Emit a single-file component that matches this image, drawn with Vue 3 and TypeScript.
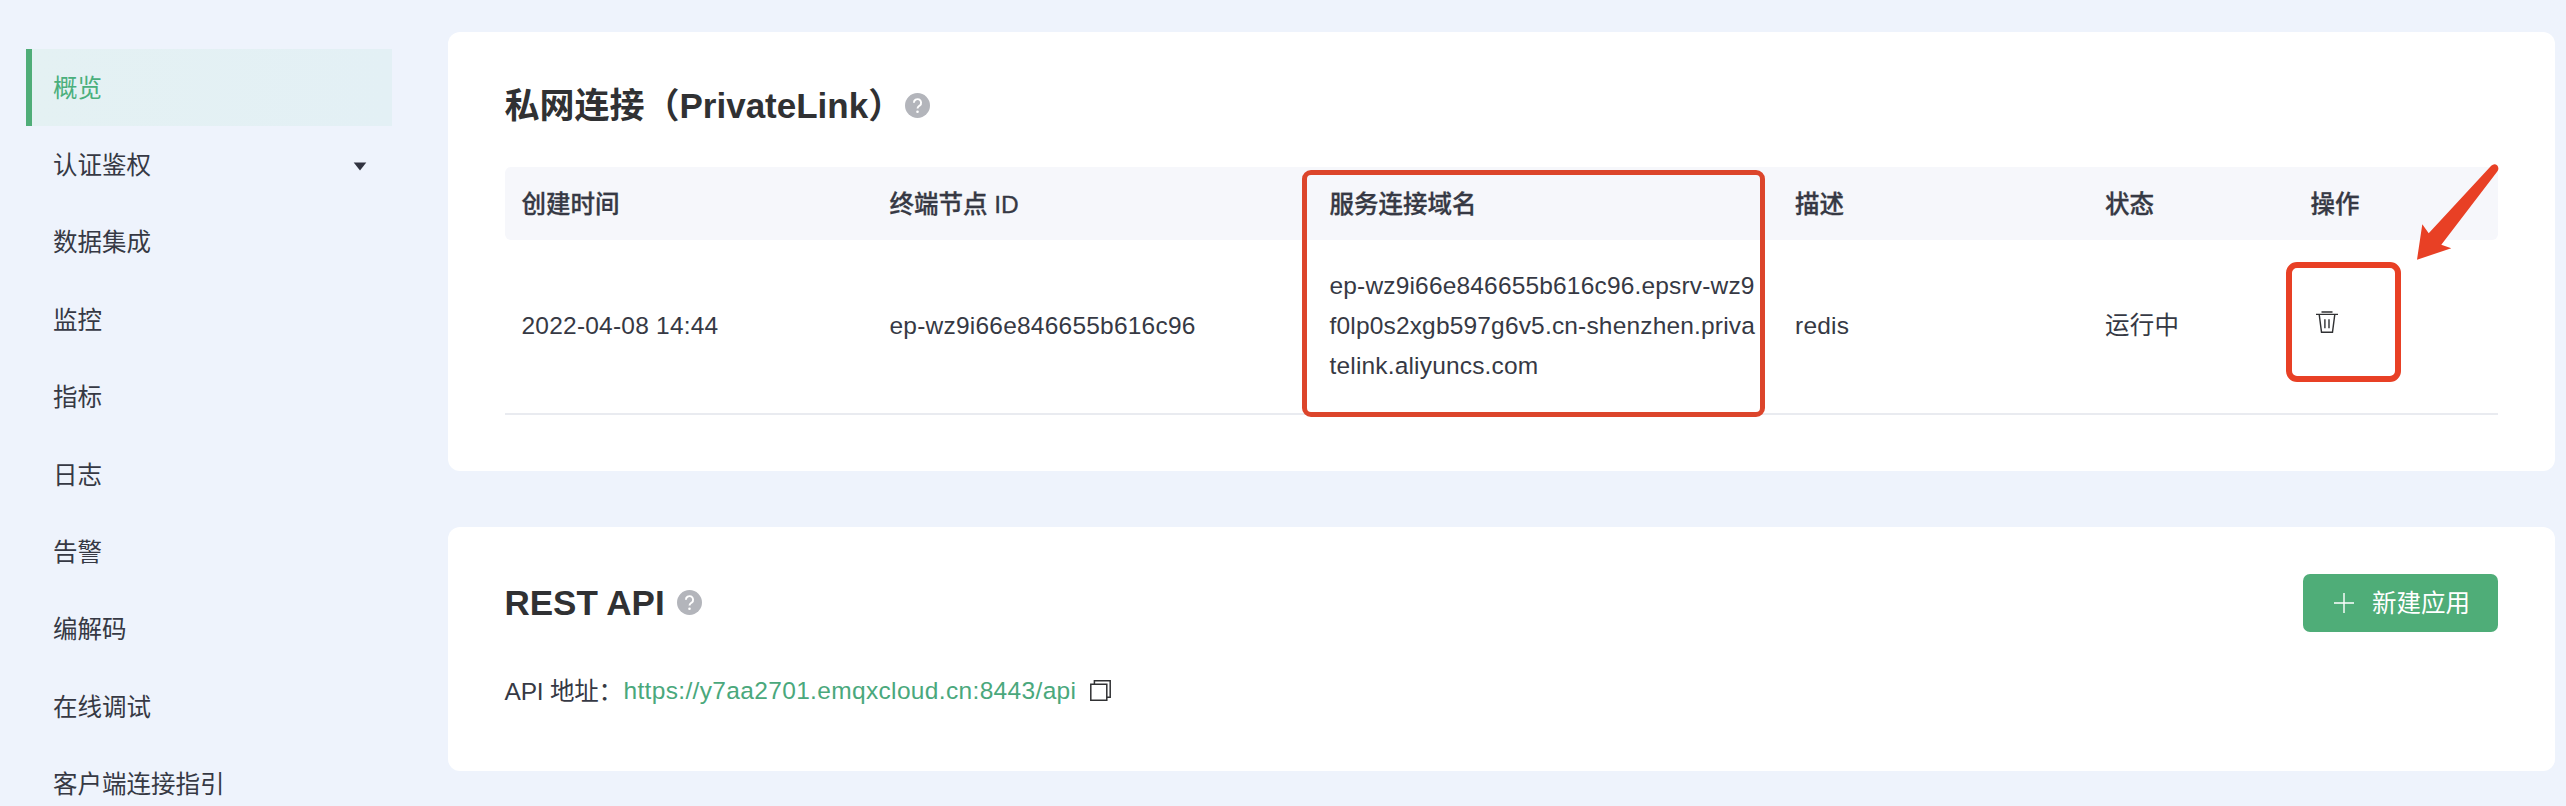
<script setup lang="ts">
interface MenuItem {
  label: string
  active?: boolean
  expandable?: boolean
}

interface Endpoint {
  createdAt: string
  endpointId: string
  domain: string
  description: string
  status: string
}

const menu: MenuItem[] = [
  { label: '概览', active: true },
  { label: '认证鉴权', expandable: true },
  { label: '数据集成' },
  { label: '监控' },
  { label: '指标' },
  { label: '日志' },
  { label: '告警' },
  { label: '编解码' },
  { label: '在线调试' },
  { label: '客户端连接指引' },
]

const columns: string[] = ['创建时间', '终端节点 ID', '服务连接域名', '描述', '状态', '操作']

const endpoints: Endpoint[] = [
  {
    createdAt: '2022-04-08 14:44',
    endpointId: 'ep-wz9i66e846655b616c96',
    domain: 'ep-wz9i66e846655b616c96.epsrv-wz9f0lp0s2xgb597g6v5.cn-shenzhen.privatelink.aliyuncs.com',
    description: 'redis',
    status: '运行中',
  },
]

const apiUrl = 'https://y7aa2701.emqxcloud.cn:8443/api'
</script>

<template>
  <div class="page">
    <nav class="sidebar">
      <a v-for="item in menu" :key="item.label" class="menu-item" :class="{ active: item.active }">
        <span class="menu-label">{{ item.label }}</span>
        <svg v-if="item.expandable" class="caret" viewBox="0 0 14 9">
          <path d="M.7.5h12.600L7 8.500z" fill="#303340" />
        </svg>
      </a>
    </nav>

    <main class="content">
      <section class="card private-link">
        <h2 class="title">
          <span>私网连接（PrivateLink）</span>
          <svg class="help" viewBox="0 0 25 25">
            <circle cx="12.5" cy="12.5" r="12.5" fill="#b3b5bb" />
            <path d="M8.9 9.7a3.6 3.6 0 1 1 5.9 2.8c-1.4 1.1-2.3 1.6-2.3 3.1" fill="none" stroke="#fff" stroke-width="1.9" />
            <circle cx="12.5" cy="18.7" r="1.3" fill="#fff" />
          </svg>
        </h2>

        <div class="table">
          <div class="row head">
            <div v-for="column in columns" :key="column" class="cell">{{ column }}</div>
          </div>
          <div v-for="row in endpoints" :key="row.endpointId" class="row body">
            <div class="cell">{{ row.createdAt }}</div>
            <div class="cell">{{ row.endpointId }}</div>
            <div class="cell domain">{{ row.domain }}</div>
            <div class="cell">{{ row.description }}</div>
            <div class="cell">{{ row.status }}</div>
            <div class="cell">
              <svg class="trash" viewBox="0 0 22 22" fill="none" stroke="#303133" stroke-width="1.4">
                <path d="M5.5 1h11M0 3.4h22M3.2 3.4l2.3 17.8h11L18.8 3.4M8.9 8.3v8.9M13 8.3v8.9" />
              </svg>
            </div>
          </div>
          <div class="mark mark-domain"></div>
          <div class="mark mark-action"></div>
          <svg class="arrow" viewBox="0 0 82 97">
            <path d="M0 95.7 5.3 60.3 11.7 69.3 74.2 1.8Q77.500-1.200 80.300 1.600Q82.500 4.500 80.300 7.500L24.300 80.700 34.300 84.300Z" fill="#e84025" />
          </svg>
        </div>
      </section>

      <section class="card rest-api">
        <header class="card-header">
          <h2 class="title compact">
            <span>REST API</span>
            <svg class="help" viewBox="0 0 25 25">
              <circle cx="12.5" cy="12.5" r="12.5" fill="#b3b5bb" />
              <path d="M8.9 9.7a3.6 3.6 0 1 1 5.9 2.8c-1.4 1.1-2.3 1.6-2.3 3.1" fill="none" stroke="#fff" stroke-width="1.9" />
              <circle cx="12.5" cy="18.7" r="1.3" fill="#fff" />
            </svg>
          </h2>
          <button class="create" type="button">
            <svg class="plus" viewBox="0 0 20 20"><path d="M10 0v20M0 10h20" stroke="#fff" stroke-width="1.4" /></svg>
            <span class="create-label">新建应用</span>
          </button>
        </header>
        <div class="address">
          <span class="address-label">API 地址：</span>
          <a class="link">{{ apiUrl }}</a>
          <svg class="copy" viewBox="0 0 21 21" fill="none" stroke="#303133" stroke-width="1.5">
            <path d="M.8 4.2h16v16h-16zM4.4 4V.8h15.8v16.4h-3.2" />
          </svg>
        </div>
      </section>
    </main>
  </div>
</template>

<style>
body {
  margin: 0;
  background: #eef3fc;
}
</style>

<style scoped>
.page {
  display: flex;
  box-sizing: border-box;
  width: 2566px;
  height: 806px;
  overflow: hidden;
  background: #eef3fc;
  color: #363944;
  font-family: "Liberation Sans", "Noto Sans CJK SC", sans-serif;
  font-size: 24.5px;
}

.sidebar {
  flex: none;
  width: 366px;
  margin: 49px 56px 0 26px;
}

.menu-item {
  display: flex;
  align-items: center;
  justify-content: space-between;
  box-sizing: border-box;
  height: 77.4px;
  padding: 0 25px 0 21px;
  border-left: 6px solid transparent;
}

.menu-item.active {
  border-left-color: #4fad78;
  background: linear-gradient(90deg, #e4f1f3, #e3f0f5);
  color: #4aaf7c;
}

.menu-label {
  padding-bottom: 3px;
}

.caret {
  width: 14px;
  height: 9px;
  margin-top: 2px;
}

.content {
  flex: none;
  display: flex;
  flex-direction: column;
  gap: 56px;
  width: 2106.5px;
  padding-top: 32px;
}

.card {
  box-sizing: border-box;
  padding: 0 56.5px;
  border-radius: 12px;
  background: #fff;
}

.private-link {
  height: 439px;
  padding-top: 48px;
}

.rest-api {
  height: 243.5px;
  padding-top: 47px;
}

.title {
  display: flex;
  align-items: center;
  gap: 1.5px;
  height: 52px;
  margin: 0;
  color: #303133;
  font-size: 35px;
  font-weight: 700;
  line-height: 52px;
}

.title.compact {
  gap: 12px;
}

.help {
  width: 25px;
  height: 25px;
  margin-bottom: 2px;
}

.table {
  position: relative;
  margin-top: 35px;
}

.row {
  display: grid;
  grid-template-columns: 368px 440px 465.5px 310px 205.5px 1fr;
  align-items: center;
}

.head {
  box-sizing: border-box;
  height: 73px;
  padding-bottom: 2px;
  border-radius: 6px;
  background: #f6f7fb;
  font-weight: 500;
  -webkit-text-stroke: 0.3px #363944;
}

.body {
  box-sizing: border-box;
  height: 174.5px;
  border-bottom: 2px solid #e9ebf0;
  line-height: 40.4px;
  letter-spacing: 0.22px;
}

.cell {
  padding-left: 17px;
}

.domain {
  padding-right: 20px;
  letter-spacing: 0.17px;
  word-break: break-all;
}

.trash {
  display: block;
  width: 22px;
  height: 22px;
  margin: -8px 0 0 5.5px;
}

.mark {
  position: absolute;
  box-sizing: border-box;
}

.mark-domain {
  top: 2.5px;
  left: 797.5px;
  width: 463px;
  height: 247.5px;
  border: 5px solid #dc452b;
  border-radius: 9px;
}

.mark-action {
  top: 95px;
  left: 1781.5px;
  width: 115px;
  height: 119.5px;
  border: 6px solid #e84025;
  border-radius: 11px;
}

.arrow {
  position: absolute;
  top: -3px;
  left: 1912.5px;
  width: 82px;
  height: 97px;
}

.card-header {
  display: flex;
  align-items: center;
  justify-content: space-between;
  height: 58px;
}

.create {
  display: flex;
  align-items: center;
  gap: 18px;
  box-sizing: border-box;
  width: 195px;
  height: 57.5px;
  padding: 0 0 0 31px;
  border: 0;
  border-radius: 7px;
  background: #4fad78;
  color: #fff;
  font: inherit;
}

.create-label {
  padding-bottom: 3px;
}

.plus {
  width: 20px;
  height: 20px;
}

.address {
  display: flex;
  align-items: center;
  height: 40px;
  margin-top: 39px;
}

.address-label {
  width: 119px;
  padding-bottom: 3px;
  letter-spacing: -0.2px;
  white-space: nowrap;
}

.link {
  color: #4aa87c;
  letter-spacing: 0.34px;
}

.copy {
  width: 21px;
  height: 21px;
  margin: 0 0 1px 14px;
}
</style>
